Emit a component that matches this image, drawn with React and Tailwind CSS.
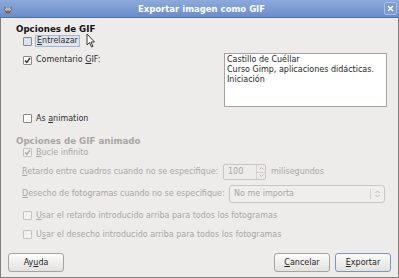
import React from "react";

function Check({ checked, disabled, hover }) {
  const border = disabled ? "border-[#c4c2bf]" : "border-[#8a8986]";
  const bg = hover ? "bg-[#d9e3f1]" : disabled ? "bg-[#f2f1f0]" : "bg-white";
  return (
    <div className={`w-[9px] h-[9px] border ${border} ${bg} rounded-[1px] flex items-center justify-center shrink-0`}>
      {checked && (
        <svg width="7" height="7" viewBox="0 0 7 7">
          <path d="M1 3.5 L2.8 5.5 L6 1" fill="none" stroke={disabled ? "#a9a7a4" : "#2e2e2e"} strokeWidth="1.3" />
        </svg>
      )}
    </div>
  );
}

function U({ children }) {
  return <span className="underline underline-offset-[1px]">{children}</span>;
}

function Btn({ children, def, className = "" }) {
  return (
    <div
      className={`h-[19px] rounded-[3px] border ${def ? "border-[#7d95bd]" : "border-[#a6a4a1]"} bg-gradient-to-b from-[#fbfbfa] to-[#e4e2df] flex items-center justify-center text-[#1e1e1e] ${className}`}
    >
      {children}
    </div>
  );
}

export default function App() {
  return (
    <div
      className="w-[399px] h-[278px] bg-[#edeceb] flex flex-col text-[8px] leading-[10px] text-[#2e2e2e] overflow-hidden relative"
      style={{ fontFamily: '"DejaVu Sans", sans-serif' }}
    >
      {/* title bar */}
      <div className="h-[18px] shrink-0 bg-gradient-to-b from-[#8eaadb] to-[#6a8dc9] border-b border-[#4e6fa8] flex items-center relative">
        <div className="ml-[3px] w-[10px] h-[10px]">
          <svg width="10" height="10" viewBox="0 0 10 10">
            <path d="M1 2 L3 4 L7 4 L9 2 L8.5 6 Q8 9.5 5 9.5 Q2 9.5 1.5 6 Z" fill="#6e6a5f" />
            <circle cx="3.7" cy="5.6" r="1.3" fill="#fff" />
            <circle cx="6.3" cy="5.6" r="1.3" fill="#fff" />
            <circle cx="3.9" cy="5.8" r="0.6" fill="#222" />
            <circle cx="6.1" cy="5.8" r="0.6" fill="#222" />
          </svg>
        </div>
        <div className="absolute left-0 right-0 top-0 h-[17px] flex items-center justify-center text-white font-bold text-[8.5px]">
          <span className="ml-[4px]">Exportar imagen como GIF</span>
        </div>
        <div className="absolute right-[2px] top-[2px] w-[13px] h-[13px] rounded-[2px] border border-[#a9bfe3] bg-[#7c9bd2] flex items-center justify-center">
          <svg width="7" height="7" viewBox="0 0 7 7">
            <path d="M1 1 L6 6 M6 1 L1 6" stroke="#fff" strokeWidth="1.4" />
          </svg>
        </div>
      </div>

      {/* body */}
      <div className="flex-1 flex flex-col border-l border-r border-b border-[#7f7e7c]">
        <div className="mt-[6px] ml-[15px] h-[11px] font-bold text-[8.7px] text-[#111]">Opciones de GIF</div>

        <div className="ml-[22px] h-[12px] flex items-center gap-[3px] relative">
          <Check hover />
          <div className="px-[1px] h-[12px] border border-[#a4b5cf] bg-[#dfe5ee] flex items-center">
            <span><U>E</U>ntrelazar</span>
          </div>
          <svg className="absolute left-[63px] top-[-2px]" width="10" height="15" viewBox="0 0 10 15">
            <path d="M1 1 L1 12 L3.5 9.5 L5.5 14 L7 13.3 L5 9 L8.5 9 Z" fill="#fff" stroke="#222" strokeWidth="0.9" />
          </svg>
        </div>

        <div className="mt-[6px] flex h-[54px]">
          <div className="ml-[22px] w-[200px] pt-[3px] flex items-start gap-[4px]">
            <Check checked />
            <span className="-mt-[1px]">Comentario <U>G</U>IF:</span>
          </div>
          <div className="ml-[1px] w-[163px] h-[54px] bg-white border border-[#a5a39f] px-[2px] pt-[1px] text-[#1e1e1e]">
            <div>Castillo de Cuéllar</div>
            <div>Curso Gimp, aplicaciones didácticas.</div>
            <div>Iniciación</div>
          </div>
        </div>

        <div className="mt-[6px] ml-[22px] h-[11px] flex items-center gap-[4px]">
          <Check />
          <span>As <U>a</U>nimation</span>
        </div>

        <div className="mt-[12px] ml-[15px] h-[11px] font-bold text-[8.7px] text-[#a8a6a3]">Opciones de GIF animado</div>

        <div className="ml-[22px] h-[11px] flex items-center gap-[4px] text-[#a8a6a3]">
          <Check checked disabled />
          <span><U>B</U>ucle infinito</span>
        </div>

        <div className="mt-[6px] ml-[21px] h-[16px] flex items-center text-[#a8a6a3]">
          <span className="w-[201px]"><U>R</U>etardo entre cuadros cuando no se especifique:</span>
          <div className="w-[43px] h-[16px] border border-[#c9c7c4] rounded-[2px] flex">
            <div className="flex-1 pl-[4px] flex items-center">100</div>
            <div className="w-[9px] border-l border-[#d2d0cd] flex flex-col">
              <div className="flex-1 flex items-center justify-center border-b border-[#d2d0cd]">
                <svg width="5" height="3" viewBox="0 0 5 3"><path d="M0.5 2.5 L2.5 0.5 L4.5 2.5" fill="none" stroke="#b8b6b3" /></svg>
              </div>
              <div className="flex-1 flex items-center justify-center">
                <svg width="5" height="3" viewBox="0 0 5 3"><path d="M0.5 0.5 L2.5 2.5 L4.5 0.5" fill="none" stroke="#b8b6b3" /></svg>
              </div>
            </div>
          </div>
          <span className="ml-[5px]">milisegundos</span>
        </div>

        <div className="mt-[5px] ml-[21px] h-[18px] flex items-center text-[#a8a6a3]">
          <span className="w-[207px]"><U>D</U>esecho de fotogramas cuando no se especifique:</span>
          <div className="w-[156px] h-[18px] border border-[#c9c7c4] rounded-[3px] bg-[#efeeed] flex items-center">
            <span className="ml-[4px] flex-1">No me importa</span>
            <div className="w-[1px] h-[10px] bg-[#d2d0cd]" />
            <svg className="mx-[4px]" width="5" height="8" viewBox="0 0 5 8">
              <path d="M0.5 3 L2.5 1 L4.5 3 M0.5 5 L2.5 7 L4.5 5" fill="none" stroke="#b8b6b3" />
            </svg>
          </div>
        </div>

        <div className="mt-[7px] ml-[22px] h-[11px] flex items-center gap-[4px] text-[#a8a6a3]">
          <Check disabled />
          <span><U>U</U>sar el retardo introducido arriba para todos los fotogramas</span>
        </div>

        <div className="mt-[8px] ml-[22px] h-[11px] flex items-center gap-[4px] text-[#a8a6a3]">
          <Check disabled />
          <span>U<U>s</U>ar el desecho introducido arriba para todos los fotogramas</span>
        </div>

        <div className="mt-[13px] mx-[7px] flex items-center">
          <Btn className="w-[56px]">Ay<U>u</U>da</Btn>
          <div className="flex-1" />
          <Btn className="w-[56px]"><U>C</U>ancelar</Btn>
          <Btn def className="w-[56px] ml-[5px]"><U>E</U>xportar</Btn>
        </div>
      </div>
    </div>
  );
}
